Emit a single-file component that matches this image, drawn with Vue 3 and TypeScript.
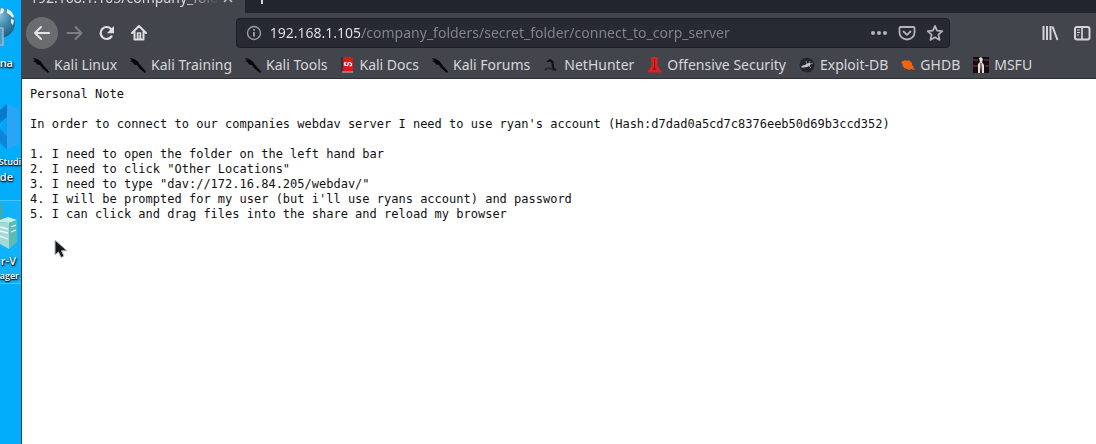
<script setup lang="ts">
import { ref } from 'vue'

type IconName = 'kali' | 'docs' | 'nethunter' | 'offsec' | 'exploit' | 'ghdb' | 'msfu'

interface Bookmark {
  label: string
  icon: IconName
}

const address = ref('192.168.1.105/company_folders/secret_folder/connect_to_corp_server')

const bookmarks: Bookmark[] = [
  { label: 'Kali Linux', icon: 'kali' },
  { label: 'Kali Training', icon: 'kali' },
  { label: 'Kali Tools', icon: 'kali' },
  { label: 'Kali Docs', icon: 'docs' },
  { label: 'Kali Forums', icon: 'kali' },
  { label: 'NetHunter', icon: 'nethunter' },
  { label: 'Offensive Security', icon: 'offsec' },
  { label: 'Exploit-DB', icon: 'exploit' },
  { label: 'GHDB', icon: 'ghdb' },
  { label: 'MSFU', icon: 'msfu' },
]

const note = `Personal Note

In order to connect to our companies webdav server I need to use ryan's account (Hash:d7dad0a5cd7c8376eeb50d69b3ccd352)

1. I need to open the folder on the left hand bar
2. I need to click "Other Locations"
3. I need to type "dav://172.16.84.205/webdav/"
4. I will be prompted for my user (but i'll use ryans account) and password
5. I can click and drag files into the share and reload my browser`
</script>

<template>
  <div class="screen">
    <aside class="desktop">
      <div class="shortcut globe">
        <svg width="21" height="50" viewBox="0 0 21 50" aria-hidden="true">
          <defs>
            <radialGradient id="ball" cx="0.45" cy="0.25" r="0.8">
              <stop offset="0" stop-color="#8fc3dc" />
              <stop offset="0.5" stop-color="#3d86ad" />
              <stop offset="1" stop-color="#1c5579" />
            </radialGradient>
          </defs>
          <circle cx="0" cy="23" r="15" fill="url(#ball)" />
          <path d="M7 9l4 2 3 5-1 2-3-3-3-2zM11 19l3 1-1 5-2-2zM1 8l3 1-1 4-3 1z" fill="#e8f4f7" />
          <path d="M0 28h3v17H0" fill="#4b9cc9" stroke="#a9b5bd" stroke-width="1.5" />
        </svg>
        <span class="caption short">na</span>
      </div>
      <div class="shortcut code">
        <svg width="21" height="50" viewBox="0 0 21 50" aria-hidden="true">
          <path d="M7 3l12 5v35L7 49z" fill="#2aa5f5" />
          <path d="M7 3v13L0 22V9z" fill="#0878c9" />
          <path d="M0 27l7 8v14L0 42z" fill="#0c86da" />
          <path d="M7 16v19L0 26z" fill="#07a2f5" />
        </svg>
        <span class="caption small">Studi</span>
        <span class="caption short">de</span>
      </div>
      <div class="shortcut server selected">
        <svg width="21" height="50" viewBox="0 0 21 50" aria-hidden="true">
          <path d="M0 2l2 3v16H0z" fill="#47a99f" />
          <path d="M0 19l8-3 9 3-8 3-9-1z" fill="#c3efe5" />
          <path d="M0 21l9 1v26l-9-5z" fill="#a3d9d7" />
          <path d="M9 22l8-3v22l-8 7z" fill="#5fb9b7" />
          <path d="M0 26l8 2M0 30l8 2M0 35l8 3M11 26l5-2M11 31l5-2" stroke="#e9fffa" stroke-width="1.3" />
        </svg>
        <span class="caption mid">r-V</span>
        <span class="caption small full">ager</span>
      </div>
    </aside>

    <main class="browser">
      <header class="chrome">
        <div class="tabs">
          <div class="tab">
            <span class="tab-title">192.168.1.105/company_fold</span>
            <button class="tab-close" aria-label="Close tab">
              <svg width="10" height="10" viewBox="0 0 10 10"><path d="M1 1l8 8M9 1L1 9" stroke="#bfc0c4" stroke-width="1.5" /></svg>
            </button>
          </div>
          <button class="tab-new" aria-label="New tab">
            <svg width="14" height="14" viewBox="0 0 14 14"><path d="M7 0v14M0 7h14" stroke="#d5d6d9" stroke-width="2" /></svg>
          </button>
        </div>

        <nav class="toolbar">
          <button class="tool back" aria-label="Back">
            <svg width="32" height="32" viewBox="0 0 32 32" fill="none" stroke="#e4e4e5" stroke-width="2" stroke-linecap="round" stroke-linejoin="round"><path d="M9 16h14M15 10l-6 6 6 6" /></svg>
          </button>
          <button class="tool" aria-label="Forward">
            <svg width="32" height="32" viewBox="0 0 32 32" fill="none" stroke="#7d7e84" stroke-width="2" stroke-linecap="round" stroke-linejoin="round"><path d="M9.500 16h14M17.500 10l6 6-6 6" /></svg>
          </button>
          <button class="tool" aria-label="Reload">
            <svg width="32" height="32" viewBox="0 0 32 32"><path d="M21.500 19.500a6 6 0 1 1-.2-7.300" fill="none" stroke="#e0e0e1" stroke-width="2.200" stroke-linecap="round" /><path d="M24 9v7.200h-7.200z" fill="#e0e0e1" /></svg>
          </button>
          <button class="tool" aria-label="Home">
            <svg width="32" height="32" viewBox="-1 0 32 32" fill="none" stroke="#e0e0e1" stroke-width="2" stroke-linecap="round" stroke-linejoin="round"><path d="M9 16l7-7 7 7M11.500 15v7.500h9V15" /><path d="M14.500 22v-6h3v6" stroke-width="1.500" /><path d="M16 18v4" stroke-width="1" /></svg>
          </button>
          <span class="spring"></span>
          <div class="urlbar">
            <svg width="16" height="16" viewBox="0 0 16 16" aria-hidden="true"><circle cx="8" cy="8" r="6.500" fill="none" stroke="#9b9ca1" stroke-width="1.400" /><path d="M8 7v4.500M8 4v1.700" stroke="#a4a5aa" stroke-width="1.800" /></svg>
            <input v-model="address" class="address" type="text" aria-label="Address" spellcheck="false" />
            <button class="action" aria-label="Page actions">
              <svg width="18" height="18" viewBox="0 0 18 18" fill="#b3b4b8"><circle cx="3" cy="9" r="2" /><circle cx="9" cy="9" r="2" /><circle cx="15" cy="9" r="2" /></svg>
            </button>
            <button class="action" aria-label="Save to Pocket">
              <svg width="18" height="18" viewBox="0 0 18 18" fill="none" stroke="#b3b4b8" stroke-width="1.800" stroke-linecap="round" stroke-linejoin="round"><path d="M2.500 3h13q1 0 1 1v4.500a7.500 7 0 0 1-15 0V4q0-1 1-1z" /><path d="M5.500 7.500L9 10.800l3.500-3.300" /></svg>
            </button>
            <button class="action" aria-label="Bookmark this page">
              <svg width="18" height="18" viewBox="0 0 18 18" fill="none" stroke="#b3b4b8" stroke-width="1.700" stroke-linejoin="round"><path d="M9 1.800l2.100 4.800 5.200.5-3.900 3.500 1.200 5.300L9 13.200l-4.600 2.700 1.200-5.300-3.900-3.500 5.200-.5z" /></svg>
            </button>
          </div>
          <span class="spring"></span>
          <button class="tool" aria-label="Library">
            <svg width="32" height="32" viewBox="-2 0 32 32" stroke="#d4d4d6" stroke-width="2"><path d="M9.500 9v14M13 9v14M16.500 9v14M18.500 9.500L23.500 23" /></svg>
          </button>
          <button class="tool" aria-label="Sidebars">
            <svg width="32" height="32" viewBox="-2 0 32 32" fill="none" stroke="#d4d4d6"><rect x="9" y="10" width="14.500" height="12.500" rx="2" stroke-width="2" /><path d="M16 10v12" stroke-width="1.700" /><path d="M11 13h3M11 15.500h3M11 18h2" stroke-width="1.200" /></svg>
          </button>
        </nav>

        <nav class="bookmarks">
          <a v-for="item in bookmarks" :key="item.label" class="bookmark" href="#">
            <svg v-if="item.icon === 'kali'" width="16" height="16" viewBox="0 0 16 16" aria-hidden="true"><path d="M0 1l4 1 4 2.500 1 2 3 3.500 4 4.500-1 1.500-6-5-2-3L4 7.500 3 5.500 0 4l2-.5z" fill="#060708" /></svg>
            <svg v-else-if="item.icon === 'docs'" width="14" height="16" viewBox="0 0 14 16" aria-hidden="true"><path d="M1 0h3v15H1z" fill="#26304f" /><path d="M3 0h10v14H3z" fill="#dd1717" /><path d="M2 14h11v2H2z" fill="#9c7775" /><path d="M11.500 8.500q0-3-2-3T8 7t-1.500 1.500T4.500 6M6.500 5.500l-2 .5v2.500M9.500 9l2-.5v-2" fill="none" stroke="#fff" stroke-width="1.200" /></svg>
            <svg v-else-if="item.icon === 'nethunter'" width="16" height="16" viewBox="0 0 16 16" aria-hidden="true"><path d="M3.500 5C5 2 8 1 10 4c2 3 0 5 1.500 7l3 1.500-4 .5C7 10 10 6 7.500 5 6 4.500 5 5.500 3.500 5z" fill="#111215" /><path d="M2 13.500q1-3 5-2 3 2 6 2" fill="none" stroke="#202227" stroke-width="1.500" /></svg>
            <svg v-else-if="item.icon === 'offsec'" width="15" height="16" viewBox="0 0 15 16" aria-hidden="true"><path d="M4.500 0h6v9l4.500 6.500H0L4.500 9z" fill="#df201f" /><path d="M7 2h1v8l1 3H6l1-3z" fill="#8d1016" /></svg>
            <svg v-else-if="item.icon === 'exploit'" width="16" height="16" viewBox="0 0 16 16" aria-hidden="true"><circle cx="8" cy="8" r="7.500" fill="#24272d" /><path d="M2 10q1-2 4-2Q8 5.500 11 6q1.500 1 0 2.500-3 2.500-8 2z" fill="#c2c4c6" /><path d="M8 7L7 4M10 6l1-2M11 7l3-1M10 9l2 2" stroke="#82858a" stroke-width="1" /></svg>
            <svg v-else-if="item.icon === 'ghdb'" width="14" height="14" viewBox="0 0 14 14" aria-hidden="true"><path d="M1 3l2 0 1-1 2 1 1-1 2 1 2 2 0 2 2 2-1 0 2 3-4-1-2 1-2-1-3-1-1-2-1-1 1-1-2-1 1-1z" fill="#ee6510" /></svg>
            <svg v-else width="16" height="16" viewBox="0 0 16 16" aria-hidden="true"><path d="M0 0h16v16H0z" fill="#170e10" /><path d="M0 3h5M11 3h5M0 9h5M12 9h4" stroke="#4f2426" stroke-width="2" /><path d="M6 1l2-1 2 2-1 3 2 3v8H9L8 8l-1 8H5V7l2-2z" fill="#e4dedb" /><path d="M8 6v9" stroke="#2b2324" stroke-width="1" /></svg>
            <span>{{ item.label }}</span>
          </a>
        </nav>
      </header>

      <pre class="note">{{ note }}</pre>
      <svg class="pointer" width="14" height="20" viewBox="0 0 14 20" aria-hidden="true"><path d="M1 1v15l3.500-3 2.500 5.500 3-1.300-2.500-5.400H13z" fill="#16181b" stroke="#b9bbbd" stroke-width="1" /></svg>
    </main>
  </div>
</template>

<style>
body {
  margin: 0;
}
</style>

<style scoped>
.screen {
  display: flex;
  min-height: 100vh;
  font-family: "Noto Sans", "Open Sans", sans-serif;
}

button {
  margin: 0;
  padding: 0;
  border: 0;
  background: none;
  display: flex;
  align-items: center;
  justify-content: center;
}

svg {
  display: block;
  flex: none;
}

.desktop {
  width: 21px;
  flex: none;
  overflow: hidden;
  background: #02adfc;
  border-right: 1px solid #16435e;
  display: flex;
  flex-direction: column;
}

.shortcut {
  display: flex;
  flex-direction: column;
  align-items: flex-end;
}

.globe {
  height: 101px;
}

.code {
  height: 99px;
}

.selected {
  height: 82px;
  background: #12b2fa;
  border-top: 1px solid #4ec5fa;
  border-bottom: 1px solid #4ec5fa;
}

.caption {
  color: #ffffff;
  font-family: "Open Sans", sans-serif;
  font-size: 11px;
  font-weight: 600;
  line-height: 15px;
  white-space: nowrap;
  text-shadow: 1px 1px 2px #000000, 0 1px 1px #052b46;
}

.globe .caption {
  padding-top: 5px;
}

.code svg {
  margin-bottom: 3px;
}

.selected svg {
  margin-bottom: 2px;
}

.small {
  font-size: 9px;
}

.short {
  margin-right: 8px;
}

.mid {
  margin-right: 5px;
}

.full {
  margin-right: 2px;
}

.browser {
  flex: 1;
  min-width: 0;
  position: relative;
  background: #ffffff;
}

.chrome {
  background: #43454c;
  border-bottom: 1px solid #2d2f34;
}

.tabs {
  display: flex;
  align-items: flex-end;
  height: 13px;
  overflow: hidden;
  background: #23252e;
}

.tab {
  display: flex;
  align-items: flex-end;
  justify-content: space-between;
  width: 223px;
  height: 32px;
  padding: 0 12px 0 8px;
  box-sizing: border-box;
  background: #43454c;
}

.tab-title {
  flex: 1;
  min-width: 0;
  overflow: hidden;
  color: #d8d8da;
  font-size: 14px;
  line-height: 20px;
  padding-bottom: 5px;
  white-space: nowrap;
  mask-image: linear-gradient(to right, #000 80%, transparent 98%);
}

.tab-close {
  padding-bottom: 10px;
}

.tab-new {
  margin-left: 10px;
  padding-bottom: 9px;
}

.toolbar {
  display: flex;
  align-items: center;
  height: 40px;
  padding: 0 0 0 4px;
}

.tool {
  width: 32px;
  height: 32px;
  flex: none;
}

.back {
  border-radius: 50%;
  background: #6b6c70;
}

.spring {
  flex: 5 1 0;
}

.urlbar {
  flex: 43 1 0;
  display: flex;
  align-items: center;
  height: 30px;
  box-sizing: border-box;
  padding: 0 0 0 9px;
  border: 1px solid #1c1d23;
  border-radius: 4px;
  background: #272933;
}

.address {
  flex: 1;
  min-width: 0;
  height: 24px;
  margin: 0 0 0 8px;
  padding: 0;
  border: 0;
  outline: 0;
  font-family: inherit;
  font-size: 14px;
  line-height: 24px;
  color: transparent;
  caret-color: #e7e7e9;
  background: linear-gradient(to right, #e7e7e9 92px, #85868d 92px);
  background-clip: text;
  -webkit-background-clip: text;
}

.action {
  width: 28px;
  height: 28px;
}

.bookmarks {
  display: flex;
  align-items: center;
  gap: 13px;
  height: 25px;
  padding: 0 11px 2px;
  box-sizing: border-box;
}

.bookmark {
  display: flex;
  align-items: center;
  gap: 5px;
  color: #d6d7d9;
  font-size: 14px;
  line-height: 20px;
  text-decoration: none;
  white-space: nowrap;
}

.note {
  margin: 0;
  padding: 8px;
  color: #111111;
  font-family: "DejaVu Sans Mono", monospace;
  font-size: 12px;
  line-height: 15px;
}

.pointer {
  position: absolute;
  left: 32px;
  top: 239px;
}
</style>
